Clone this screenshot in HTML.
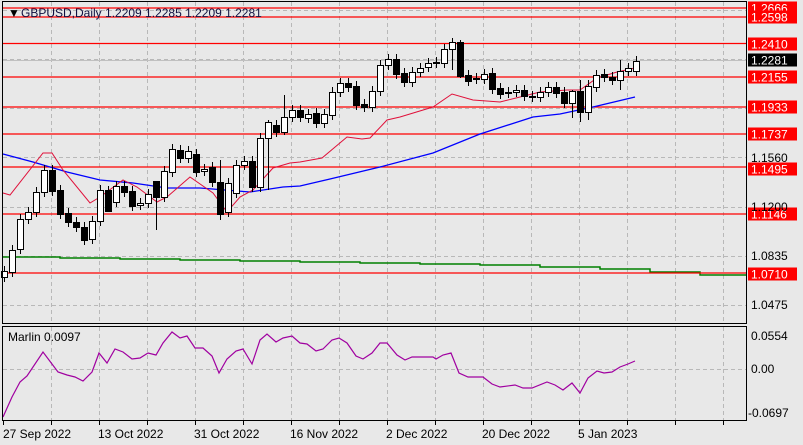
<!DOCTYPE html>
<html><head><meta charset="utf-8"><style>
html,body{margin:0;padding:0;background:#e8e8e8;width:803px;height:445px;overflow:hidden}
svg{display:block}
text{font-family:"Liberation Sans",sans-serif;font-size:12px}
</style></head><body>
<svg id="s" width="803" height="445" xmlns="http://www.w3.org/2000/svg">
<rect width="803" height="445" fill="#e8e8e8"/>
<g stroke="#b8b8b8" stroke-dasharray="4,3" stroke-width="1" id="grid"></g>
<line x1="2" y1="60.5" x2="746" y2="60.5" stroke="#c0c0c0"/>
<polyline points="3,257 60,257 60,258 120,258 120,259 180,259 180,260 240,260 240,261 300,261 300,262 360,262 360,263 420,263 420,264 480,264 480,265 540,265 540,267 600,267 600,269 650,269 650,272 700,272 700,275 746,275" fill="none" stroke="#008000" stroke-width="1.5"/>
<g stroke="#ff0000" stroke-width="1.3">
<line x1="3" y1="8" x2="746" y2="8"/><line x1="3" y1="17" x2="746" y2="17"/>
<line x1="3" y1="43.5" x2="746" y2="43.5"/><line x1="3" y1="77" x2="746" y2="77"/>
<line x1="3" y1="107" x2="746" y2="107"/><line x1="3" y1="134" x2="746" y2="134"/>
<line x1="3" y1="167" x2="746" y2="167"/><line x1="3" y1="214" x2="746" y2="214"/>
<line x1="3" y1="273" x2="746" y2="273"/>
</g>
<polyline fill="none" stroke="#0000ff" stroke-width="1.3" points="3,154 33,162 67,172 100,180 133,183 167,188 200,188 250,192 283,187 300,186 330,179 380,167 433,153 480,134 533,117 560,114 593,107 635,97"/>
<polyline fill="none" stroke="#e0103a" stroke-width="1" points="3,193 10,195 43,153 52,153 63,170 90,203 100,197 123,180 137,187 157,202 167,197 190,177 213,193 227,212 240,197 253,190 273,168 290,163 300,162 322,158 347,137 362,139 370,138 387,120 400,117 433,107 452,94 473,100 500,102 520,97 540,92 567,90 580,90 597,78 617,72 635,68"/>
<g id="candles"></g>
<polyline fill="none" stroke="#a000a0" stroke-width="1.2" points="3,417 12,397 20,382 27,376 43,352 58,372 67,375 75,377 83,381 92,372 99,353 107,363 115,349 123,352 132,359 140,358 148,353 156,355 163,343 172,332 180,338 187,336 195,348 203,348 212,356 219,373 227,359 236,351 243,349 252,364 260,340 267,334 276,342 283,338 292,336 300,343 307,344 316,351 323,349 332,340 339,338 347,343 356,356 363,359 372,353 380,343 387,343 397,355 405,360 412,357 433,357 436,359 443,355 451,353 459,373 468,377 483,377 492,384 500,387 515,385 523,388 532,388 547,382 555,385 563,390 572,383 580,393 588,378 597,371 604,373 612,372 620,367 628,364 635,361"/>
<rect x="2.5" y="1.5" width="744" height="322" fill="none" stroke="#000"/>
<rect x="2.5" y="326.5" width="744" height="94" fill="none" stroke="#000"/>
<g id="ticks" stroke="#000"></g>
<text x="8" y="17" fill="#000">▼</text>
<text x="21" y="17" fill="#101040">GBPUSD,Daily  1.2209 1.2285 1.2209 1.2281</text>
<text x="8" y="341" fill="#000">Marlin 0.0097</text>
<g id="labels"></g>
<g fill="#000">
<text x="751" y="162">1.1560</text><text x="751" y="211">1.1200</text>
<text x="751" y="260">1.0835</text><text x="751" y="309">1.0475</text>
<text x="751" y="340">0.0554</text><text x="751" y="373">0.00</text>
<text x="748" y="417">-0.0697</text>
<text x="3" y="438">27 Sep 2022</text><text x="98" y="438">13 Oct 2022</text>
<text x="194" y="438">31 Oct 2022</text><text x="290" y="438">16 Nov 2022</text>
<text x="386" y="438">2 Dec 2022</text><text x="482" y="438">20 Dec 2022</text>
<text x="578" y="438">5 Jan 2023</text>
</g>
</svg>
<script>
var NS="http://www.w3.org/2000/svg";
function el(p,t,a,txt){var e=document.createElementNS(NS,t);for(var k in a)e.setAttribute(k,a[k]);if(txt)e.textContent=txt;p.appendChild(e);return e;}
var g=document.getElementById('grid');
[10,59,108,157,207,256,305,369].forEach(function(y){el(g,'line',{x1:3,y1:y+.5,x2:746,y2:y+.5});});
for(var x=51;x<746;x+=48){el(g,'line',{x1:x+.5,y1:2,x2:x+.5,y2:323});el(g,'line',{x1:x+.5,y1:327,x2:x+.5,y2:420});}
var t=document.getElementById('ticks');
for(var x=3;x<746;x+=48){el(t,'line',{x1:x+.5,y1:421,x2:x+.5,y2:425});}
var C=[[277,271],[272,250],[249,219],[219,212],[212,192],[192,170],[170,191],[190,214],[213,222],[222,227],[227,240],[239,221],[221,190],[190,211],[202,186],[186,192],[191,206],[205,203],[203,194],[181,197],[197,171],[172,149],[150,158],[158,151],[154,172],[171,169],[167,182],[182,214],[212,183],[193,165],[165,161],[161,187],[187,138],[138,122],[125,132],[132,117],[117,110],[110,117],[118,114],[113,123],[123,114],[115,92],[92,83],[83,87],[86,105],[104,107],[107,91],[91,65],[65,59],[59,74],[73,82],[82,72],[72,68],[67,63],[63,62],[63,49],[49,42],[42,76],[75,81],[78,79],[79,74],[73,89],[88,94],[93,92],[92,90],[90,96],[96,97],[97,92],[92,87],[87,93],[92,103],[103,91],[91,112],[112,86],[87,75],[74,77],[77,80],[80,71],[71,68],[71,61]];
var wk={13:[186,210],19:[190,230],27:[160,220],33:[120,190],35:[95,135],56:[38,70],57:[40,78],71:[90,118],72:[80,122],73:[80,120],77:[60,90]};
var cg=document.getElementById('candles');
C.forEach(function(c,i){var x=4+i*8;var top=Math.min(c[0],c[1]),bot=Math.max(c[0],c[1]);var w=wk[i]||[top-5,bot+5];
el(cg,'line',{x1:x+.5,y1:w[0],x2:x+.5,y2:w[1],stroke:'#000'});
el(cg,'rect',{x:x-2.5,y:top+.5,width:6,height:Math.max(bot-top,1),fill:c[1]<c[0]?'#fff':'#000',stroke:'#000'});});
var L=document.getElementById('labels');
[[8,'1.2666'],[17,'1.2598'],[44,'1.2410'],[77,'1.2155'],[107,'1.1933'],[134,'1.1737'],[169,'1.1495'],[214,'1.1146'],[274,'1.0710']].forEach(function(a){el(L,'rect',{x:748,y:a[0]-6.5,width:49,height:13,fill:'#ff0000'});el(L,'text',{x:751,y:a[0]+4.5,fill:'#fff'},a[1]);});
el(L,'rect',{x:748,y:53.5,width:49,height:13,fill:'#000'});el(L,'text',{x:751,y:64.5,fill:'#fff'},'1.2281');
</script>
</body></html>
